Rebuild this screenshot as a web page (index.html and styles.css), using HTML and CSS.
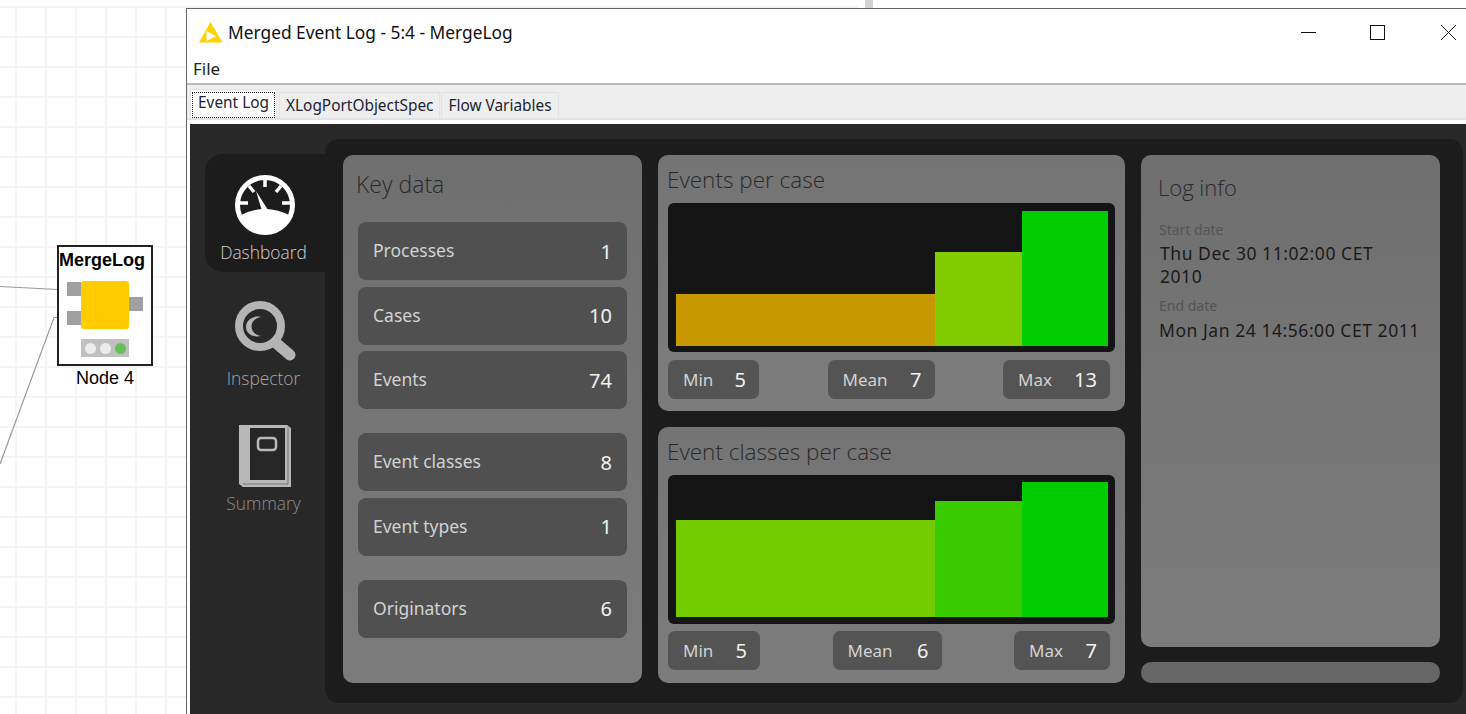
FILE: index.html
```html
<!DOCTYPE html>
<html lang="en">
<head>
  <meta charset="UTF-8" />
  <title>Merged Event Log - 5:4 - MergeLog</title>
  <link rel="stylesheet" href="styles.css">
</head>
<body>

<div class="canvas">
  <svg class="wires" width="186" height="480" viewBox="0 0 186 480">
    <path d="M0 286.5 L67 290" />
    <path d="M0 464 L54 317.5 L67 317.5" />
  </svg>
  <div class="node">
    <div class="node-box">
      <div class="node-name">MergeLog</div>
      <div class="node-body">
        <div class="ports">
          <span class="port"></span>
          <span class="port"></span>
        </div>
        <div class="node-core"></div>
        <span class="port port-out"></span>
      </div>
      <div class="lights">
        <span class="light"></span>
        <span class="light"></span>
        <span class="light light-on"></span>
      </div>
    </div>
    <div class="node-label">Node 4</div>
  </div>
</div>
<div class="split-bar"></div>

<div class="window">
  <div class="titlebar">
    <svg class="app-icon" width="24" height="21" viewBox="0 0 24 21">
      <path d="M11.5 0 L23.5 20.5 L0 20.5 Z" fill="#ffd200" />
      <path d="M7.5 9 L17 14.2 L7.5 19 Z" fill="#fff" />
    </svg>
    <span class="win-title">Merged Event Log - 5:4 - MergeLog</span>
    <div class="win-controls">
      <svg class="win-min" width="15" height="15" viewBox="0 0 15 15"><path d="M0 7.5 H15" /></svg>
      <svg width="15" height="15" viewBox="0 0 15 15"><rect x="0.5" y="0.5" width="14" height="14" /></svg>
      <svg width="15" height="15" viewBox="0 0 15 15"><path d="M0 0 L15 15 M15 0 L0 15" /></svg>
    </div>
  </div>
  <div class="menubar"><span>File</span></div>
  <div class="tabstrip">
    <div class="tab tab-active"><span>Event Log</span></div>
    <div class="tab">XLogPortObjectSpec</div>
    <div class="tab">Flow Variables</div>
  </div>

  <div class="app">
    <nav class="side">
      <div class="side-item side-active">
        <svg width="62" height="62" viewBox="0 0 62 62">
          <circle cx="31" cy="31" r="27.5" fill="none" stroke="#fff" stroke-width="5" />
          <path d="M5 42 Q31 28 57 42 A28 28 0 0 1 5 42 Z" fill="#fff" />
          <path d="M22 17 L28 37 L34 36 Z" fill="#fff" />
          <path d="M31 5 V13 M15 12 L20 18 M47 12 L42 18 M6 29 H14 M56 29 H48" stroke="#fff" stroke-width="3.5" />
        </svg>
        <span>Dashboard</span>
      </div>
      <div class="side-item side-inspector">
        <svg width="62" height="62" viewBox="0 0 62 62">
          <circle cx="26" cy="26" r="21" fill="none" stroke="#b4b4b4" stroke-width="8" />
          <path d="M27 17 C18 15 12 21 12 27 C12 33 18 38 27 36 C21 35 17.5 31 17.5 26.5 C17.5 22 21 18 27 17 Z" fill="#b4b4b4" />
          <path d="M42 43 L56 55" stroke="#b4b4b4" stroke-width="11" stroke-linecap="round" />
        </svg>
        <span>Inspector</span>
      </div>
      <div class="side-item side-summary">
        <svg width="56" height="64" viewBox="0 0 56 64">
          <path d="M2 1 H50 L54 4 V63 H6 L2 60 Z" fill="#b8b8b8" />
          <rect x="13" y="4" width="35" height="52" fill="#262626" />
          <path d="M51 3 V60 H6" fill="none" stroke="#777" stroke-width="1" />
          <rect x="21" y="14" width="18" height="12" rx="3" fill="none" stroke="#b8b8b8" stroke-width="2.5" />
        </svg>
        <span>Summary</span>
      </div>
    </nav>

    <main class="board">
      <section class="card key-data">
        <h2>Key data</h2>
        <div class="key-group">
          <div class="key-row"><span>Processes</span><b>1</b></div>
          <div class="key-row"><span>Cases</span><b>10</b></div>
          <div class="key-row"><span>Events</span><b>74</b></div>
        </div>
        <div class="key-group">
          <div class="key-row"><span>Event classes</span><b>8</b></div>
          <div class="key-row"><span>Event types</span><b>1</b></div>
        </div>
        <div class="key-group">
          <div class="key-row"><span>Originators</span><b>6</b></div>
        </div>
      </section>

      <div class="charts">
        <section class="card chart-card">
          <h2>Events per case</h2>
          <div class="chart">
            <div class="bar bar-wide" style="height:52px;background:#c89800"></div>
            <div class="bar" style="height:94px;background:#80cc00"></div>
            <div class="bar" style="height:135px;background:#00cc00"></div>
          </div>
          <div class="stats stats-a">
            <div class="stat stat-min"><span>Min</span><b>5</b></div>
            <div class="stat stat-mean"><span>Mean</span><b>7</b></div>
            <div class="stat stat-max"><span>Max</span><b>13</b></div>
          </div>
        </section>
        <section class="card chart-card">
          <h2>Event classes per case</h2>
          <div class="chart chart-b">
            <div class="bar bar-wide" style="height:97px;background:#74cc00"></div>
            <div class="bar" style="height:116px;background:#38cc00"></div>
            <div class="bar" style="height:135px;background:#00cc00"></div>
          </div>
          <div class="stats stats-b">
            <div class="stat stat-min"><span>Min</span><b>5</b></div>
            <div class="stat stat-mean"><span>Mean</span><b>6</b></div>
            <div class="stat stat-max"><span>Max</span><b>7</b></div>
          </div>
        </section>
      </div>

      <div class="info-col">
        <section class="card log-info">
          <h2>Log info</h2>
          <div class="info-label">Start date</div>
          <div class="info-value">Thu Dec 30 11:02:00 CET<br>2010</div>
          <div class="info-label">End date</div>
          <div class="info-value info-end">Mon Jan 24 14:56:00 CET 2011</div>
        </section>
        <div class="info-bar"></div>
      </div>
    </main>
  </div>
</div>

</body>
</html>
```

FILE: styles.css
```css
html, body {
  margin: 0;
  height: 714px;
  overflow: hidden;
  background: #fff;
  font-family: "Noto Sans", sans-serif;
}

/* workflow canvas behind the dialog */
.canvas {
  position: absolute;
  left: 0;
  top: 6px;
  width: 858px;
  height: 708px;
  background-image:
    linear-gradient(#f5f5f5 2px, transparent 2px),
    linear-gradient(90deg, #f5f5f5 2px, transparent 2px);
  background-size: 30px 30px;
  background-position: 0 0, 15px 0;
}
.wires {
  position: absolute;
  left: 0;
  top: -6px;
}
.wires path {
  fill: none;
  stroke: #999;
  stroke-width: 1.2;
}
.split-bar {
  position: absolute;
  left: 865px;
  top: 0;
  width: 8px;
  height: 8px;
  background: #d4d4d4;
}
.node {
  position: absolute;
  left: 57px;
  top: 239px;
  width: 96px;
  font-family: "Liberation Sans", sans-serif;
  color: #000;
  text-align: center;
}
.node-box {
  box-sizing: border-box;
  height: 121px;
  border: 2px solid #222;
  background: #fff;
  position: relative;
}
.node-name {
  font-size: 18px;
  font-weight: 700;
  line-height: 26px;
  text-align: left;
}
.node-body {
  display: flex;
  height: 48px;
  margin: 8px 0 0 8px;
}
.ports {
  width: 14px;
  padding-top: 1px;
}
.port {
  display: block;
  width: 14px;
  height: 14px;
  background: #a0a0a0;
  margin-bottom: 15px;
}
.port-out {
  margin-top: 16px;
}
.node-core {
  width: 48px;
  height: 48px;
  border-radius: 3px;
  background: #ffcc00;
}
.lights {
  display: flex;
  justify-content: center;
  align-items: center;
  gap: 4px;
  width: 48px;
  height: 18px;
  margin: 10px 0 0 22px;
  background: #c0c0c0;
}
.light {
  width: 11px;
  height: 11px;
  border-radius: 50%;
  background: #ececec;
}
.light-on {
  background: #66c058;
}
.node-label {
  font-size: 18px;
  line-height: 24px;
}

/* dialog */
.window {
  position: absolute;
  left: 186px;
  top: 8px;
  right: 0;
  bottom: 0;
  display: flex;
  flex-direction: column;
  background: #fff;
  border-left: 1px solid #666;
  border-top: 1px solid #666;
}
.titlebar {
  display: flex;
  align-items: center;
  height: 46px;
  flex: none;
  padding: 0 10px 0 12px;
}
.win-title {
  margin-left: 5px;
  font-size: 17.33px;
  color: #111;
}
.win-controls {
  margin-left: auto;
  display: flex;
  gap: 56px;
}
.win-controls svg {
  display: block;
  fill: none;
  stroke: #111;
  stroke-width: 1;
}
.win-min {
  margin-right: -2px;
}
.menubar {
  flex: none;
  height: 28px;
  line-height: 28px;
  padding-left: 6px;
  font-size: 17px;
  color: #222;
  border-bottom: 2px solid #b9b9b9;
}
.tabstrip {
  flex: none;
  display: flex;
  align-items: flex-end;
  height: 33px;
  padding-left: 3px;
  background: #eee;
  border-bottom: 2px solid #e2e2e2;
  font-size: 15.4px;
  color: #223;
}
.tab {
  box-sizing: border-box;
  height: 26px;
  line-height: 25px;
  padding: 0 6px;
  border: 1px solid #e2e2e2;
  border-bottom: 0;
  margin-right: 1px;
}
.tab-active {
  height: 29px;
  width: 87px;
  padding: 2px 1px;
  margin-right: 2px;
  background: #fff;
}
.tab-active span {
  display: block;
  height: 24px;
  line-height: 19px;
  text-align: center;
  border: 1px dotted #222;
}

/* dashboard */
.app {
  flex: 1;
  display: flex;
  margin: 4px 0 0 3px;
  background: #282828;
  min-height: 0;
}
.side {
  width: 135px;
  flex: none;
  padding: 30px 0 0 15px;
  box-sizing: border-box;
}
.side-item {
  height: 126px;
  width: 120px;
  display: flex;
  flex-direction: column;
  align-items: center;
  font-family: "Open Sans", sans-serif;
  font-weight: 300;
  font-size: 17.4px;
  color: #a6a6a6;
  box-sizing: border-box;
  padding-top: 20px;
}
.side-item svg {
  display: block;
  margin-bottom: 4px;
}
.side-item span {
  margin-right: 3px;
}
.side-active {
  height: 118px;
  margin-bottom: 8px;
  background: #1c1c1c;
  border-radius: 18px 0 0 18px;
  color: #d0d0d0;
}
.side-summary {
  color: #8e8e8e;
  padding-top: 18px;
}
.side-summary svg {
  margin-bottom: 3px;
}
.board {
  flex: 1;
  display: flex;
  gap: 16px;
  margin: 15px 3px 11px 0;
  padding: 16px 18px 20px;
  background: #1c1c1c;
  border-radius: 14px;
}
.card {
  box-sizing: border-box;
  background: linear-gradient(#6f6f6f, #7c7c7c);
  border-radius: 10px;
}
.card h2 {
  margin: 0;
  font-family: "Open Sans", sans-serif;
  font-weight: 300;
  font-size: 22.5px;
  color: #2a2a2a;
}
.key-data {
  width: 299px;
  padding: 15px 15px 0;
}
.key-data h2 {
  font-size: 23px;
  line-height: 30px;
  margin: -1px 0 23px -2px;
}
.key-group {
  display: flex;
  flex-direction: column;
  gap: 6.5px;
  margin-bottom: 24px;
}
.key-row {
  display: flex;
  justify-content: space-between;
  align-items: center;
  height: 58px;
  padding: 0 15px;
  border-radius: 8px;
  background: #505050;
  font-size: 17.5px;
  color: #d2d2d2;
}
.key-row span {
  margin-bottom: 2px;
}
.key-row b {
  font-weight: 400;
  font-size: 20px;
  color: #f2f2f2;
}
.charts {
  width: 467px;
  display: flex;
  flex-direction: column;
  gap: 16px;
}
.chart-card {
  height: 256px;
  padding: 10px 10px 0;
  background: linear-gradient(#747474, #7c7c7c);
}
.chart-card h2 {
  line-height: 30px;
  margin: 0 0 8px -1px;
}
.chart {
  box-sizing: border-box;
  display: flex;
  align-items: flex-end;
  height: 149px;
  width: 447px;
  padding: 0 7px 6px 8px;
  background: #141414;
  border-radius: 6px;
}
.chart-b {
  padding-bottom: 7px;
}
.bar {
  flex: 1;
}
.bar-wide {
  flex: 3;
}
.stats {
  display: flex;
  justify-content: space-between;
  margin-top: 8px;
  width: 442px;
}
.stats-b {
  margin-top: 7px;
}
.stat {
  box-sizing: border-box;
  display: flex;
  justify-content: space-between;
  align-items: center;
  height: 39px;
  padding: 0 13px 0 15px;
  background: #545454;
  border-radius: 7px;
  font-size: 17px;
  color: #d2d2d2;
}
.stat b {
  font-weight: 400;
  font-size: 20px;
  color: #f2f2f2;
}
.stats-a .stat-min { width: 91px; }
.stats-a .stat-mean { width: 107px; }
.stats-a .stat-max { width: 107px; }
.stats-b .stat-min { width: 92px; }
.stats-b .stat-mean { width: 109px; }
.stats-b .stat-max { width: 96px; }
.info-col {
  width: 299px;
  display: flex;
  flex-direction: column;
  gap: 15px;
}
.log-info {
  height: 492px;
  padding: 17px 17px;
}
.log-info h2 {
  font-size: 22px;
  line-height: 30px;
  margin-bottom: 18px;
}
.info-label {
  font-size: 14px;
  line-height: 20px;
  color: #555;
  padding-left: 1px;
}
.info-value {
  font-size: 17.5px;
  letter-spacing: 0.55px;
  line-height: 23px;
  color: #1a1a1a;
  padding: 2px 0 7.5px 2px;
}
.info-end {
  padding: 3.5px 0 0 1px;
}
.info-bar {
  height: 21px;
  border-radius: 10px;
  background: #666;
}
```
